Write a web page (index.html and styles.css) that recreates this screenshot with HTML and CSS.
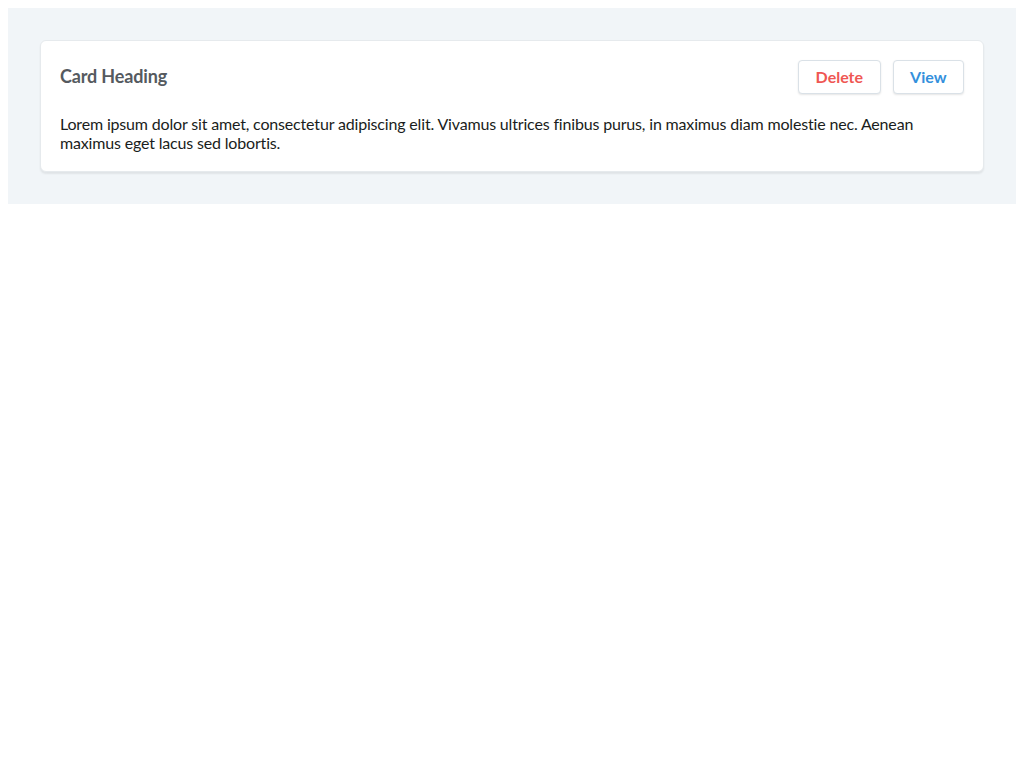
FILE: index.html
```html
<!DOCTYPE html>
<html>
<head>
<meta charset="utf-8">
<link rel="stylesheet" href="styles.css">
</head>
<body>
<div class="wrap">
  <div class="card">
    <div class="card-header">
      <h2 class="card-title">Card Heading</h2>
      <div class="actions">
        <button class="btn btn-red">Delete</button>
        <button class="btn btn-blue">View</button>
      </div>
    </div>
    <p class="card-body">Lorem ipsum dolor sit amet, consectetur adipiscing elit. Vivamus ultrices finibus purus, in maximus diam molest&zwnj;ie nec. Aenean maximus eget lacus sed lobort&zwnj;is.</p>
  </div>
</div>
</body>
</html>
```
FILE: styles.css
```css
body {
  margin: 8px;
  font-family: Lato, "Open Sans", sans-serif;
  background: #fff;
}
.wrap {
  background: #f1f5f8;
  padding: 32px;
}
.card {
  background: #fff;
  border-radius: 6px;
  border: 1px solid #e6eaed;
  box-shadow: 0 2px 2px rgba(0,0,0,0.07);
  padding: 19px;
}
.card-header {
  display: flex;
  align-items: center;
  justify-content: space-between;
}
.card-title {
  margin: 0 0 2px;
  font-size: 18px;
  font-weight: 700;
  color: #555a5f;
  letter-spacing: -0.15px;
}
.actions {
  display: flex;
  gap: 12px;
}
.btn {
  font-family: Lato, sans-serif;
  font-size: 16px;
  font-weight: 700;
  height: 34px;
  padding: 0 16.5px 2px;
  background: #fff;
  border: 1px solid #dae1e7;
  border-radius: 4px;
  box-shadow: 0 1px 2px rgba(0,0,0,0.1);
}
.btn-red { color: #ef5753; }
.btn-blue { color: #3490dc; }
.card-body {
  margin: 20px 0 0;
  font-size: 16px;
  line-height: 19px;
  color: #1a1d20;
  letter-spacing: -0.17px;
}
```
